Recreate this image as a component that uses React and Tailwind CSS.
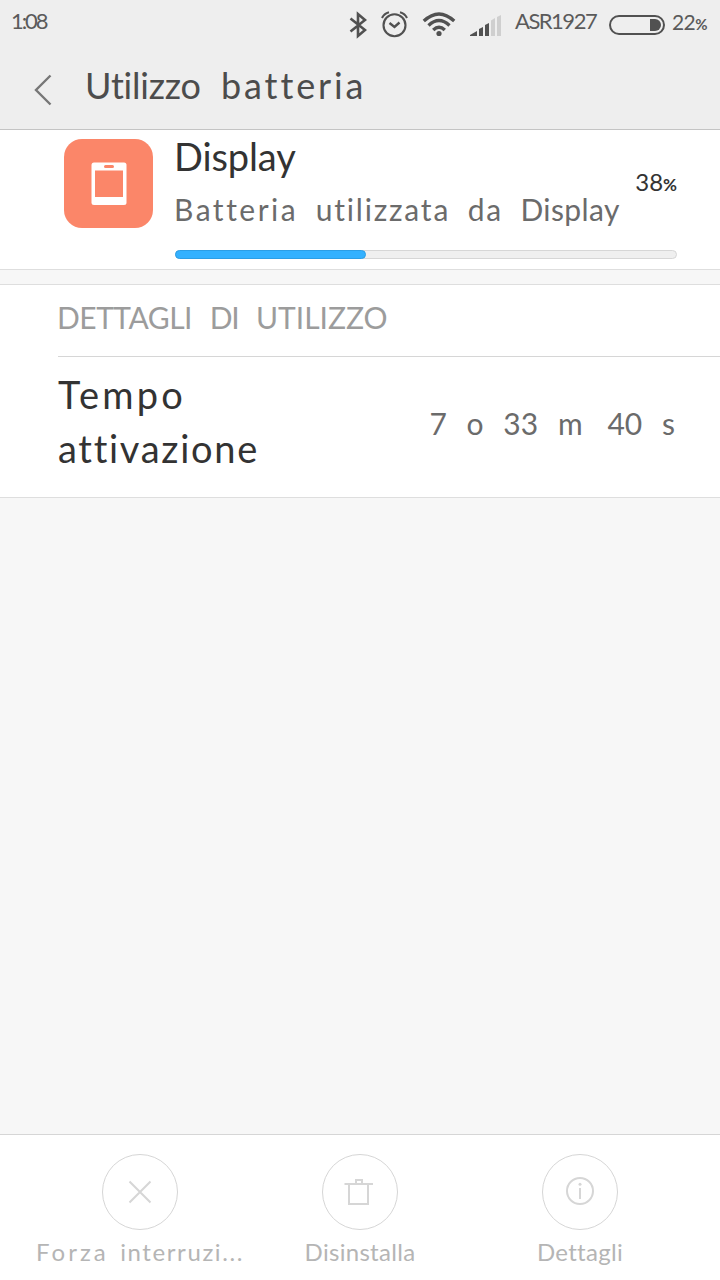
import React from 'react';

const actions = [
  {
    id: 'stop',
    label: (
      <>
        <span className="tracking-[3px]">Forza</span> <span className="tracking-[1.6px]">interruzi...</span>
      </>
    ),
  },
  { id: 'uninstall', label: 'Disinstalla' },
  { id: 'details', label: 'Dettagli' },
];

const SignalIcon = () => (
  <svg width="32" height="22" viewBox="0 0 32 22">
    <path fill="#515151" d="M0 21V20L7 16V21ZM9 21V14L13 12V21ZM15 21V10L19 8V21Z" />
    <path fill="#cfcfcf" d="M21 21V5.5L25 3V21ZM27 21V2L31 0V21Z" />
  </svg>
);

const StatusBar = () => (
  <div className="h-[48px] flex items-start pl-[11px] text-[#5a5a5a]">
    <span className="w-[338px] text-[22px] leading-[42px] tracking-[-2.1px]">1:08</span>
    {/* Bluetooth */}
    <svg width="18" height="28" viewBox="0 0 18 28" className="mt-[11px]" fill="none" stroke="#515151" strokeWidth="2.6">
      <path d="M1.5 7.5L16 19L9 25V3L16 9L1.5 20.5" />
    </svg>
    {/* Alarm */}
    <svg width="28" height="28" viewBox="0 0 28 28" className="mt-[10px] ml-[14px]" fill="none" stroke="#515151" strokeWidth="2.1">
      <circle cx="13.5" cy="15.2" r="11" />
      <path d="M8.5 13L13.5 17L18.5 12.5" strokeWidth="2.4" />
      <path d="M1 8Q3 3.5 8 2.2M26 8Q24 3.5 19 2.2" />
    </svg>
    {/* Wifi */}
    <svg width="34" height="25" viewBox="0 0 34 25" className="mt-[12px] ml-[13px]" fill="none" stroke="#515151" strokeWidth="3.3">
      <path d="M1.8 9Q17 -5.2 32.2 9" />
      <path d="M6.5 13.5Q17 3.5 27.5 13.5" />
      <path d="M11.2 18Q17 12.3 22.8 18" />
      <circle cx="17" cy="21.5" r="2.6" fill="#515151" stroke="none" />
    </svg>
    <div className="mt-[15px] ml-[14px]">
      <SignalIcon />
    </div>
    <span className="ml-[13px] w-[94px] text-[22px] leading-[42px] tracking-[-1.5px] whitespace-nowrap">ASR1927</span>
    {/* Battery */}
    <svg width="57" height="20" viewBox="0 0 57 20" className="mt-[15px]">
      <rect x="1" y="1" width="54" height="18" rx="9" fill="none" stroke="#515151" strokeWidth="2" />
      <path fill="#515151" d="M41 4H46A6 6 0 0 1 46 16H41Z" />
    </svg>
    <span className="ml-[6px] text-[21px] leading-[43px] tracking-[-0.6px] whitespace-nowrap">
      22<span className="text-[15px] font-bold">%</span>
    </span>
  </div>
);

const Header = () => (
  <header className="h-[130px] bg-[#eeeeee] border-b border-[#c4c4c4]">
    <StatusBar />
    <div className="flex items-start pl-[34px]">
      <svg width="20" height="32" viewBox="0 0 20 32" className="mt-[26px]" fill="none" stroke="#777777" strokeWidth="2.4">
        <path d="M16.5 1.5L2 16L16.5 30.5" />
      </svg>
      <h1 className="ml-[31px] mt-[15px] text-[36px] leading-[44px] text-[#4c4c4c] [word-spacing:11px] whitespace-nowrap">
        <span className="tracking-[-0.2px]">Utilizzo</span> <span className="tracking-[2.9px]">batteria</span>
      </h1>
    </div>
  </header>
);

const AppIcon = () => (
  <div className="w-[89px] h-[89px] mt-[9px] rounded-[18px] bg-[#fb8669] flex items-center justify-center shrink-0">
    <svg width="36" height="44" viewBox="0 0 36 44">
      <rect x="0.5" y="0.5" width="35" height="42.5" rx="2.5" fill="#ffffff" />
      <rect x="13" y="3" width="10" height="3" rx="1.5" fill="#fb8669" />
      <rect x="4" y="8.5" width="28" height="26.5" fill="#fb8669" />
    </svg>
  </div>
);

const UsageCard = ({ percent }) => (
  <section className="h-[140px] bg-white border-b border-[#dedede] flex pl-[64px] pr-[43px]">
    <AppIcon />
    <div className="ml-[22px] flex-1 min-w-0">
      <div className="flex justify-between">
        <div className="whitespace-nowrap">
          <h2 className="-ml-px mt-[3px] text-[38px] leading-[46px] text-[#333333] tracking-[-0.1px]">Display</h2>
          <p className="-ml-px mt-[12px] text-[30px] leading-[36px] text-[#6b6b6b] [word-spacing:9.8px]">
            <span className="tracking-[2.5px]">Batteria</span> <span className="tracking-[1.8px]">utilizzata</span>{' '}
            <span className="tracking-[1.8px]">da</span> <span className="tracking-[0.4px]">Display</span>
          </p>
        </div>
        <span className="mt-[37px] text-[24px] leading-[30px] text-[#333333] -ml-4 tracking-[0px]">
          {percent}
          <span className="text-[17px] font-bold">%</span>
        </span>
      </div>
      <div className="mt-[23px] h-[9px] rounded-full bg-[#efefef] border border-[#d6d6d6]">
        <div
          className="-mt-px -ml-px h-[9px] rounded-full bg-[#33b1ff] border border-[#2c9ee6]"
          style={{ width: `calc(${percent}% + 1px)` }}
        />
      </div>
    </div>
  </section>
);

const DetailsCard = () => (
  <section className="mt-[14px] h-[214px] bg-white border-y border-[#dedede] pl-[58px]">
    <h3 className="h-[72px] border-b border-[#d6d6d6] text-[30px] leading-[65px] text-[#9c9c9c] [word-spacing:10.2px] whitespace-nowrap">
      <span className="-ml-px tracking-[-0.5px]">DETTAGLI</span> <span className="tracking-[-1.5px]">DI</span>{' '}
      <span>UTILIZZO</span>
    </h3>
    <div className="flex justify-between pr-[43px]">
      <p className="mt-[10px] w-[220px] text-[38px] leading-[54px] text-[#333333]">
        <span className="tracking-[3.2px]">Tempo</span> <span className="tracking-[1.7px]">attivazione</span>
      </p>
      <p className="mt-[46px] pr-[2px] text-[30px] leading-[40px] text-[#6b6b6b] [word-spacing:12.1px] whitespace-nowrap">
        7 o 33 <span className="tracking-[5px]">m</span> 40 s
      </p>
    </div>
  </section>
);

const ActionIcon = ({ id }) => (
  <svg width="32" height="32" viewBox="0 0 32 32" fill="none" stroke="#d6d6d6" strokeWidth="2">
    {id === 'stop' && <path d="M5.5 5.5L26.5 26.5M26.5 5.5L5.5 26.5" />}
    {id === 'uninstall' && <path d="M0.5 8H29M5 8V28H24V8M12 8V4H18V8" />}
    {id === 'details' && (
      <>
        <circle cx="16" cy="15" r="13" />
        <path d="M16 12V23" />
        <circle cx="16" cy="8.3" r="1.5" fill="#d6d6d6" stroke="none" />
      </>
    )}
  </svg>
);

const BottomBar = () => (
  <footer className="mt-auto h-[146px] bg-white border-t border-[#d6d6d6] px-[30px] grid grid-cols-3">
    {actions.map((a) => (
      <div key={a.id} className="pt-[19px] flex flex-col items-center">
        <div className="w-[76px] h-[76px] rounded-full border border-[#d6d6d6] flex items-center justify-center">
          <ActionIcon id={a.id} />
        </div>
        <span className="mt-[7px] text-[24px] leading-[30px] text-[#b5b5b5] whitespace-nowrap tracking-[0.3px] [word-spacing:5px]">
          {a.label}
        </span>
      </div>
    ))}
  </footer>
);

const App = () => (
  <div className="w-[720px] h-[1280px] overflow-hidden flex flex-col bg-[#f7f7f7] font-[Lato,sans-serif]">
    <Header />
    <UsageCard percent={38} />
    <DetailsCard />
    <BottomBar />
  </div>
);

export default App;
